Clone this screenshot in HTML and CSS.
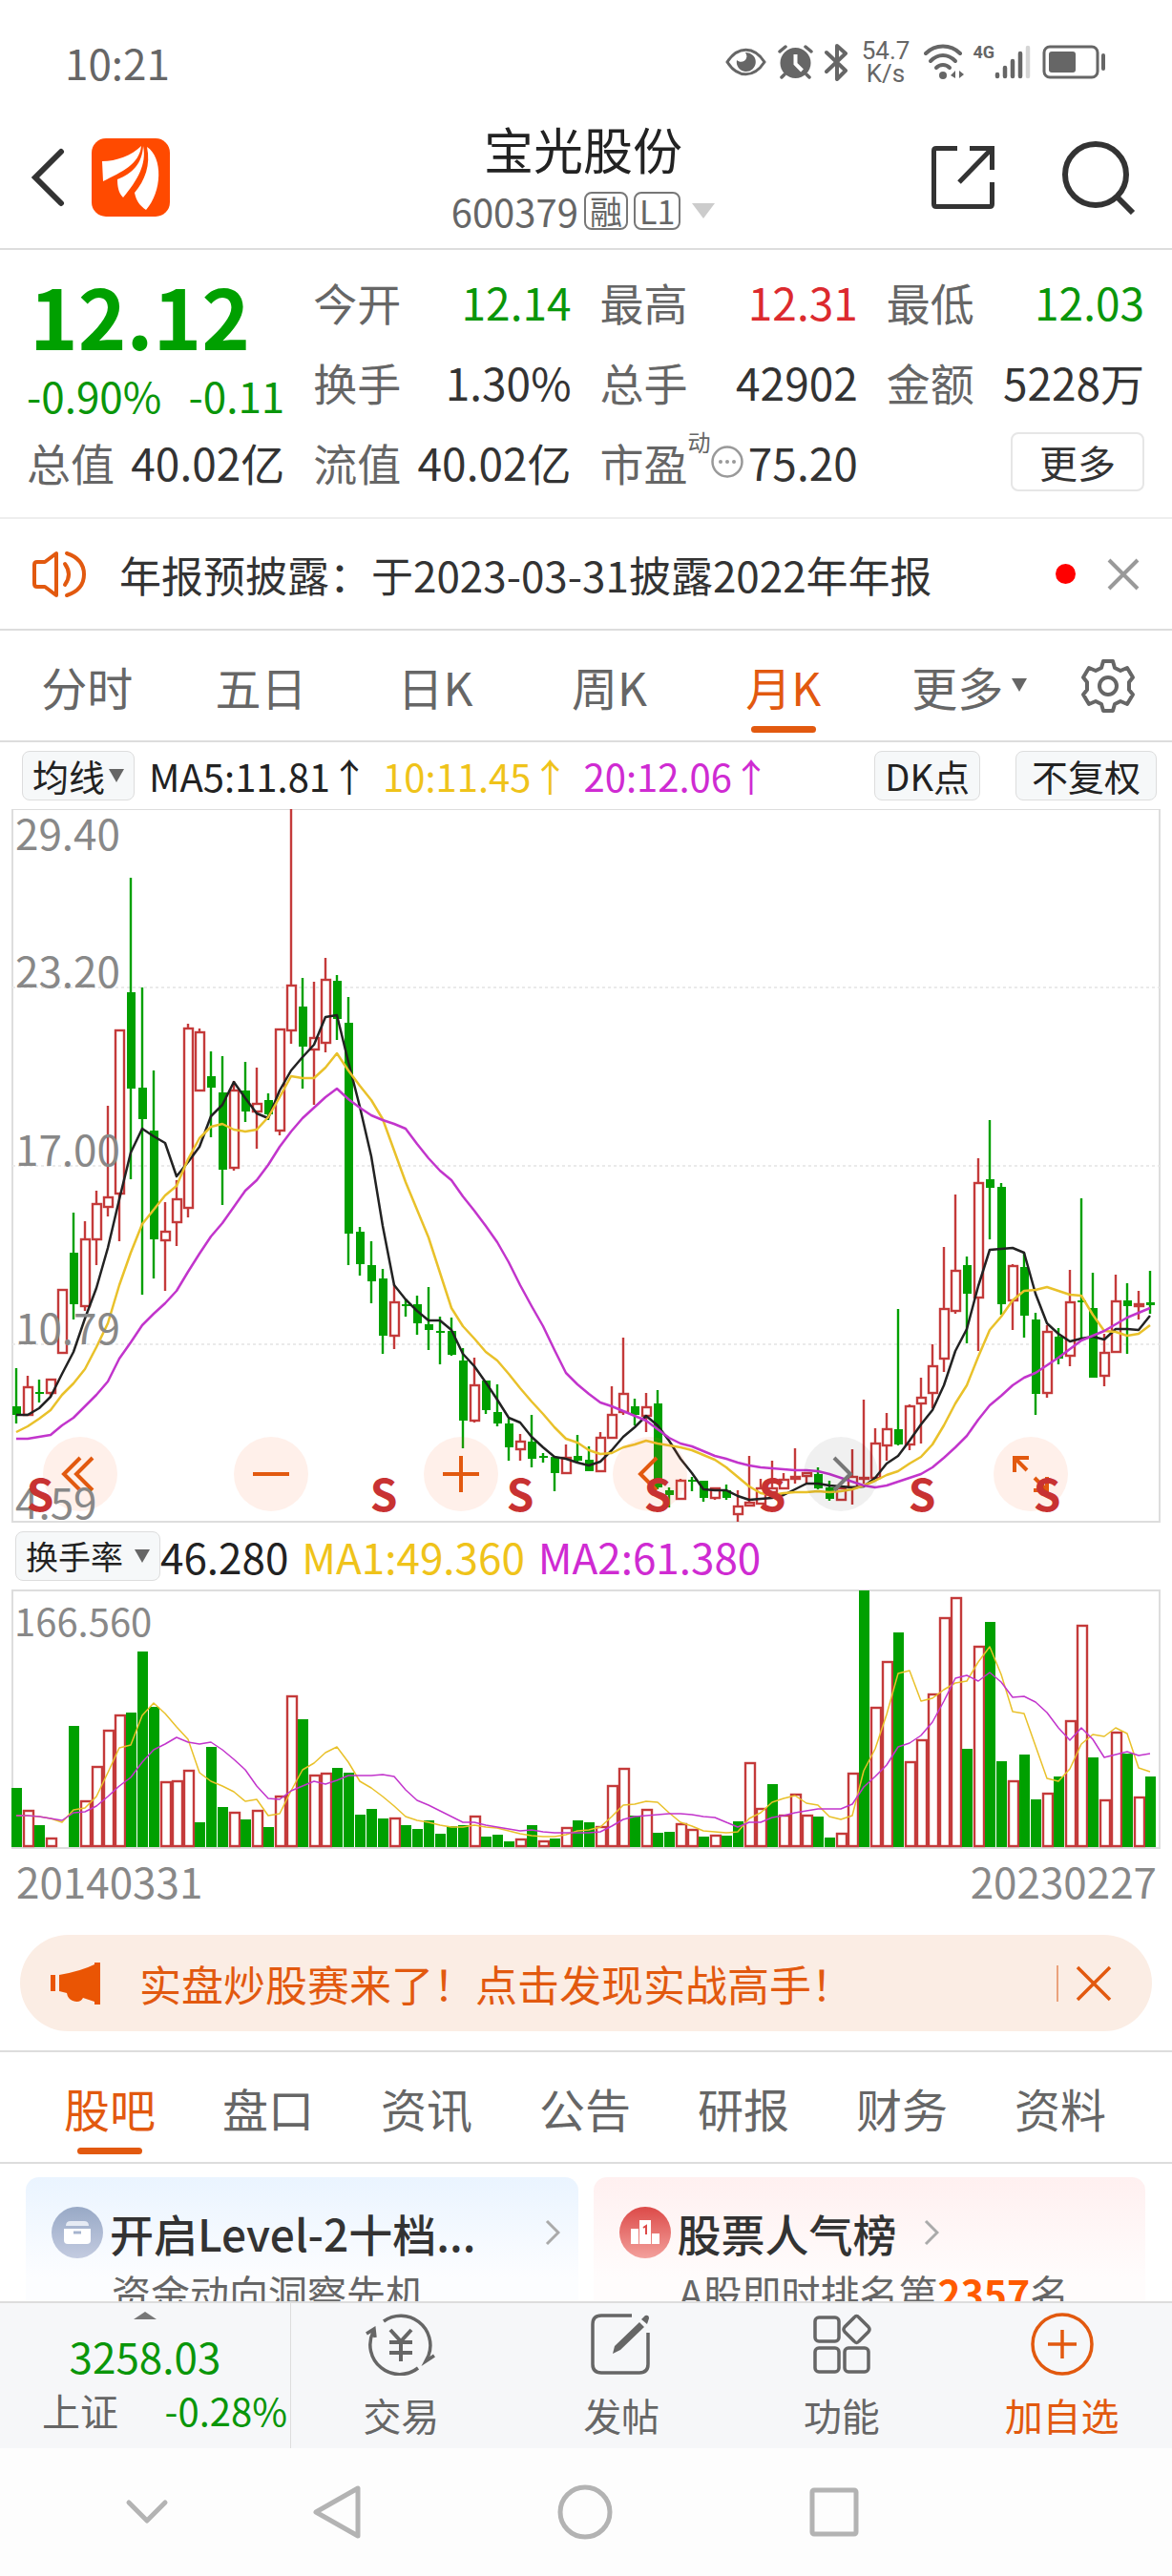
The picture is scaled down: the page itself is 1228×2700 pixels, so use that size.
FILE: index.html
```
<!DOCTYPE html>
<html lang="zh-CN">
<head>
  <meta charset="UTF-8">
  <meta name="viewport" content="width=device-width, initial-scale=1.0">
  <title>宝光股份 600379</title>
  <link rel="stylesheet" href="styles.css">
</head>
<body>

  <div class="status-bar">
    <span class="clock">10:21</span>
    <div class="status-icons">
      <svg class="ic-eye" width="43" height="30" viewBox="0 0 43 30">
        <path d="M2 15C13-2 30-2 41 15C30 32 13 32 2 15Z" fill="none" stroke="#666" stroke-width="3"/>
        <path d="M21 5a10 10 0 1 1-9 8c3 3 9 2 10-2c1-2 0-4-1-6Z" fill="#666"/>
      </svg>
      <svg class="ic-alarm" width="37" height="36" viewBox="0 0 37 36">
        <circle cx="18.500" cy="19" r="16" fill="#666"/>
        <path d="M18.500 10v10l7 7" fill="none" stroke="#fff" stroke-width="4"/>
        <path d="M2 7l6-5M35 7l-6-5M7 31l-3 3M30 31l3 3" stroke="#666" stroke-width="3.500" stroke-linecap="round"/>
      </svg>
      <svg class="ic-bt" width="24" height="40" viewBox="0 0 24 40">
        <path d="M2 10l20 19l-9 9V3l9 8L2 30" fill="none" stroke="#666" stroke-width="4" stroke-linejoin="round" stroke-linecap="round"/>
      </svg>
      <div class="net-speed"><span>54.7</span><span>K/s</span></div>
      <svg class="ic-wifi" width="42" height="38" viewBox="0 0 42 38">
        <g fill="none" stroke="#666" stroke-width="4" stroke-linecap="round">
          <path d="M2 10C12 0 28 0 38 10"/>
          <path d="M7 18C15 10 25 10 33 18"/>
          <path d="M13 25C17 21 23 21 27 25"/>
        </g>
        <circle cx="20" cy="33" r="4" fill="#666"/>
        <path d="M28 33l5-5v8zM42 32l-5-4v8z" fill="#666"/>
      </svg>
      <div class="signal">
        <span class="signal-type">4G</span>
        <svg width="38" height="36" viewBox="0 0 38 36" stroke-width="4.500" stroke-linecap="round">
          <path d="M3 31v2M11 24v9M19 17v16M27 9v24" stroke="#666"/>
          <path d="M35 3v30" stroke="#d5d5d5"/>
        </svg>
      </div>
      <svg class="ic-battery" width="68" height="36" viewBox="0 0 68 36">
        <rect x="2" y="2" width="56" height="32" rx="6" fill="none" stroke="#666" stroke-width="3"/>
        <rect x="7" y="7" width="28" height="22" rx="3" fill="#666"/>
        <path d="M64 11v14" stroke="#666" stroke-width="4" stroke-linecap="round"/>
      </svg>
    </div>
  </div>

  <header class="top-bar">
    <div class="top-left">
      <button class="icon-btn" aria-label="返回">
        <svg width="36" height="62" viewBox="0 0 36 62"><path d="M32 4L5 31L32 58" fill="none" stroke="#333" stroke-width="6" stroke-linecap="round"/></svg>
      </button>
      <svg class="logo" width="82" height="82" viewBox="0 0 82 82">
        <rect width="82" height="82" rx="15" fill="#ff4a00"/>
        <g fill="#fff">
          <path d="M11 24C26 24 42 18 52 8C50 27 32 35 12 45Z"/>
          <path d="M54 8C58 27 48 44 33 62C28 57 27 50 27 43C43 37 53 26 54 8Z"/>
          <path d="M58 9C75 20 74 56 57 75C50 70 47 66 45 57C56 44 62 28 58 9Z"/>
        </g>
      </svg>
    </div>
    <div class="stock-title">
      <h1>宝光股份</h1>
      <div class="stock-code">
        <span>600379</span>
        <span class="tag">融</span>
        <span class="tag">L1</span>
        <i class="caret caret-light"></i>
      </div>
    </div>
    <div class="top-right">
      <button class="icon-btn" aria-label="分享">
        <svg width="66" height="66" viewBox="0 0 66 66" fill="none" stroke="#333" stroke-width="5">
          <path d="M27 2.500H5Q2.500 2.500 2.500 5V61Q2.500 63.500 5 63.500H61Q63.500 63.500 63.500 61V38"/>
          <path d="M40 2.500H63.500V25M63 3L29 38"/>
        </svg>
      </button>
      <button class="icon-btn" aria-label="搜索">
        <svg width="78" height="78" viewBox="0 0 78 78" fill="none" stroke="#333" stroke-width="6">
          <circle cx="36" cy="36" r="32"/>
          <path d="M58 59L75 76"/>
        </svg>
      </button>
    </div>
  </header>

  <section class="quote">
    <div class="price-box">
      <div class="price">12.12</div>
      <div class="change"><span>-0.90%</span><span>-0.11</span></div>
    </div>
    <div class="item"><span class="label">今开</span><span class="down">12.14</span></div>
    <div class="item"><span class="label">最高</span><span class="up">12.31</span></div>
    <div class="item"><span class="label">最低</span><span class="down">12.03</span></div>
    <div class="item"><span class="label">换手</span><span>1.30%</span></div>
    <div class="item"><span class="label">总手</span><span>42902</span></div>
    <div class="item"><span class="label">金额</span><span>5228万</span></div>
    <div class="item"><span class="label">总值</span><span>40.02亿</span></div>
    <div class="item"><span class="label">流值</span><span>40.02亿</span></div>
    <div class="item">
      <span class="label pe">市盈<sup>动</sup>
        <svg width="34" height="34" viewBox="0 0 34 34">
          <circle cx="17" cy="17" r="15.500" fill="none" stroke="#999" stroke-width="2.500"/>
          <g fill="#999"><circle cx="10" cy="17" r="2"/><circle cx="17" cy="17" r="2"/><circle cx="24" cy="17" r="2"/></g>
        </svg>
      </span>
      <span>75.20</span>
    </div>
    <div class="item item-more"><button class="more-btn">更多</button></div>
  </section>

  <section class="notice">
    <svg class="speaker" width="58" height="50" viewBox="0 0 58 50" fill="none" stroke="#e2590f" stroke-width="4" stroke-linejoin="round" stroke-linecap="round">
      <path d="M26 3V47L14 38H6Q3 38 3 35V15Q3 12 6 12H14Z"/>
      <path d="M35 14Q43 25 35 36M37 3Q55 9 55 25T37 47"/>
    </svg>
    <a class="notice-text" href="#">年报预披露：于2023-03-31披露2022年年报</a>
    <i class="dot"></i>
    <button class="icon-btn" aria-label="关闭公告">
      <svg width="36" height="36" viewBox="0 0 36 36"><path d="M3 3L33 33M33 3L3 33" stroke="#999" stroke-width="4"/></svg>
    </button>
  </section>

  <nav class="period-tabs">
    <button>分时</button>
    <button>五日</button>
    <button>日K</button>
    <button>周K</button>
    <button class="active">月K</button>
    <button>更多<i class="caret caret-small"></i></button>
    <button class="gear" aria-label="设置">
      <svg width="58" height="58" viewBox="0 0 58 58" fill="none" stroke="#666" stroke-width="4" stroke-linejoin="round">
        <path d="M24 3H34L36 10L42 13L49 10L55 20L51 25V33L55 38L49 48L42 45L36 48L34 55H24L22 48L16 45L9 48L3 38L7 33V25L3 20L9 10L16 13L22 10Z"/>
        <circle cx="29" cy="29" r="9"/>
      </svg>
    </button>
  </nav>

  <div class="indicator-bar">
    <button class="chip">均线<i class="caret"></i></button>
    <span class="ma-dark">MA5:11.81↑</span>
    <span class="ma-yellow">10:11.45↑</span>
    <span class="ma-purple">20:12.06↑</span>
    <button class="chip chip-dk">DK点</button>
    <button class="chip chip-right">不复权</button>
  </div>

  <div class="chart">
    <svg id="kline" viewBox="12 0 1204 748"></svg>
    <button class="round-btn pos1" aria-label="最早">
      <svg viewBox="0 0 78 78"><path d="M39 22L22 39L39 56M52 22L35 39L52 56"/></svg>
    </button>
    <button class="round-btn pos2" aria-label="缩小">
      <svg viewBox="0 0 78 78"><path d="M20 39H58"/></svg>
    </button>
    <button class="round-btn pos3" aria-label="放大">
      <svg viewBox="0 0 78 78"><path d="M20 39H58M39 20V58"/></svg>
    </button>
    <button class="round-btn pos4" aria-label="向左">
      <svg viewBox="0 0 78 78"><path d="M46 22L29 39L46 56"/></svg>
    </button>
    <button class="round-btn round-grey pos5" aria-label="向右">
      <svg viewBox="0 0 78 78"><path d="M32 22L49 39L32 56"/></svg>
    </button>
    <button class="round-btn pos6" aria-label="全屏">
      <svg viewBox="0 0 78 78"><path d="M22 37V22H37M22 22L35 35M43 43L56 56M42 56H56V42"/></svg>
    </button>
    <svg class="overlay" viewBox="12 0 1204 748">
      <g class="axis">
        <text x="16" y="43">29.40</text>
        <text x="16" y="187">23.20</text>
        <text x="16" y="374">17.00</text>
        <text x="16" y="561">10.79</text>
        <text x="16" y="744">4.59</text>
      </g>
      <g class="sell" id="sell-marks"></g>
    </svg>
  </div>

  <div class="indicator-bar turnover-bar">
    <button class="chip">换手率<i class="caret"></i></button>
    <span class="ma-dark">46.280</span>
    <span class="ma-yellow">MA1:49.360</span>
    <span class="ma-purple">MA2:61.380</span>
  </div>

  <div class="chart">
    <svg id="turnover" viewBox="12 0 1204 272"></svg>
    <svg class="overlay" viewBox="12 0 1204 272">
      <g class="axis axis-small"><text x="15" y="49">166.560</text></g>
    </svg>
  </div>
  <div class="dates"><span>20140331</span><span>20230227</span></div>

  <div class="banner">
    <svg width="54" height="46" viewBox="0 0 54 46" fill="#ea5504">
      <path d="M0 14h5v17H0zM9 14Q32 10 46 3V1h6v44h-6v-3L34 38Q31 44 23 41Q18 39 17 33L9 31Z"/>
    </svg>
    <a class="banner-text" href="#">实盘炒股赛来了！点击发现实战高手！</a>
    <button class="icon-btn banner-close" aria-label="关闭">
      <svg width="38" height="38" viewBox="0 0 38 38"><path d="M2 2L36 36M36 2L2 36" stroke="#e2590f" stroke-width="3.500"/></svg>
    </button>
  </div>

  <nav class="info-tabs">
    <button class="active">股吧</button>
    <button>盘口</button>
    <button>资讯</button>
    <button>公告</button>
    <button>研报</button>
    <button>财务</button>
    <button>资料</button>
  </nav>

  <div class="cards">
    <a class="card card-blue" href="#">
      <div class="card-head">
        <svg width="54" height="54" viewBox="0 0 54 54">
          <defs><linearGradient id="g1" x2="0" y2="1"><stop stop-color="#98a9c6"/><stop offset="1" stop-color="#c3cbe0"/></linearGradient></defs>
          <circle cx="27" cy="27" r="27" fill="url(#g1)"/>
          <path d="M15 20Q15 15 20 15H34Q39 15 39 20Z" fill="#e6ebf4"/>
          <path d="M13 23H41V35Q41 39 37 39H17Q13 39 13 35Z" fill="#fff"/>
          <path d="M23 27H31" stroke="#a6b4ce" stroke-width="3"/>
        </svg>
        <span class="card-title">开启Level-2十档...</span>
        <svg class="arrow arrow-end" width="16" height="28" viewBox="0 0 16 28"><path d="M2 2L14 14L2 26"/></svg>
      </div>
      <p>资金动向洞察先机</p>
    </a>
    <a class="card card-red" href="#">
      <div class="card-head">
        <svg width="54" height="54" viewBox="0 0 54 54">
          <defs><linearGradient id="g2" x2="0" y2="1"><stop stop-color="#dc4a48"/><stop offset="1" stop-color="#f3a09c"/></linearGradient></defs>
          <circle cx="27" cy="27" r="27" fill="url(#g2)"/>
          <path d="M12 23h8v16h-8zM21 14h12v25H21zM34 28h8v11h-8z" fill="#fff"/>
          <path d="M25 22l3-2v9" fill="none" stroke="#dc4a48" stroke-width="2"/>
        </svg>
        <span class="card-title">股票人气榜</span>
        <svg class="arrow" width="16" height="28" viewBox="0 0 16 28"><path d="M2 2L14 14L2 26"/></svg>
      </div>
      <p>A股即时排名第<b>2357</b>名</p>
    </a>
  </div>

  <footer class="bottom">
    <div class="tool-bar">
      <button class="index-box">
        <i class="caret-up"></i>
        <span class="index-value">3258.03</span>
        <span class="index-row"><span>上证</span><span class="down">-0.28%</span></span>
      </button>
      <button class="tool">
        <svg width="74" height="66" viewBox="0 0 74 66" fill="none" stroke="#666" stroke-width="3.500">
          <path d="M19 9A31 31 0 0 1 66 45M66 45L63 51L72 45M55 58A31 31 0 0 1 8 20M1 22L9 17L10 26"/>
          <path d="M26 18L37 30L48 18M25 31H49M25 42H49M37 30V51" stroke-width="4"/>
        </svg>
        <span>交易</span>
      </button>
      <button class="tool">
        <svg width="66" height="66" viewBox="0 0 66 66" fill="none" stroke="#666" stroke-width="3.500">
          <path d="M44 3H12Q3 3 3 12V54Q3 63 12 63H52Q61 63 61 54V21"/>
          <path d="M24 43L26 35L52 10L57 15L32 39ZM54 7L58 3Q62 2 62 6L60 12Z" fill="#666" stroke="none"/>
        </svg>
        <span>发帖</span>
      </button>
      <button class="tool">
        <svg width="62" height="66" viewBox="0 0 62 66" fill="none" stroke="#666" stroke-width="3.500">
          <rect x="3" y="5" width="25" height="25" rx="4"/>
          <rect x="3" y="37" width="25" height="25" rx="4"/>
          <rect x="34" y="37" width="25" height="25" rx="4"/>
          <path d="M44 5Q46.500 2 49 5L59 15Q61 17.500 59 20L49 30Q46.500 33 44 30L34 20Q32 17.500 34 15Z"/>
        </svg>
        <span>功能</span>
      </button>
      <button class="tool tool-add">
        <svg width="66" height="66" viewBox="0 0 66 66" fill="none" stroke="#e2590f" stroke-width="3.500">
          <circle cx="33" cy="33" r="31"/>
          <path d="M18 33H48M33 18V48"/>
        </svg>
        <span>加自选</span>
      </button>
    </div>
    <div class="sys-nav">
      <svg class="sys-hide" width="46" height="28" viewBox="0 0 46 28"><path d="M4 4L23 23L42 4"/></svg>
      <svg class="sys-back" width="52" height="58" viewBox="0 0 52 58"><path d="M48 4V54L4 29Z"/></svg>
      <svg class="sys-home" width="58" height="58" viewBox="0 0 58 58"><circle cx="29" cy="29" r="26"/></svg>
      <svg class="sys-recent" width="54" height="54" viewBox="0 0 54 54"><rect x="4" y="4" width="46" height="46" rx="2"/></svg>
    </div>
  </footer>

  <script src="chart.js"></script>
</body>
</html>
```

FILE: styles.css
```
* {
  box-sizing: border-box;
}
body {
  margin: 0;
  padding-bottom: 287px;
  background: #fff;
  color: #333;
  font-family: "Noto Sans CJK SC", "Noto Sans", sans-serif;
  font-size: 44px;
  line-height: 1;
}
button {
  border: none;
  background: none;
  padding: 0;
  color: inherit;
  font: inherit;
  cursor: pointer;
}
a {
  color: inherit;
  text-decoration: none;
}
svg {
  display: block;
  flex: none;
}
.up {
  color: #dc2a2e;
}
.down {
  color: #0a960a;
}
.icon-btn {
  display: block;
}

/* carets */
.caret {
  display: inline-block;
  border: 8px solid transparent;
  border-top: 14px solid #666;
  border-bottom: 0;
}
.caret-light {
  border-width: 16px 12px 0;
  border-top-color: #ccc;
}
.caret-small {
  border-width: 14px 8px 0;
}
.caret-up {
  border: 12px solid transparent;
  border-bottom: 8px solid #777;
  border-top: 0;
}

/* status bar */
.status-bar {
  display: flex;
  align-items: center;
  justify-content: space-between;
  height: 122px;
  padding: 8px 68px 0 68px;
  color: #666;
}
.clock {
  font-size: 44px;
}
.status-icons {
  display: flex;
  align-items: center;
  gap: 12px;
}
.net-speed {
  display: flex;
  flex-direction: column;
  align-items: center;
  margin: 0 3px;
  font-family: Roboto, sans-serif;
  font-size: 26px;
  line-height: 24px;
}
.signal {
  display: flex;
  align-items: flex-start;
  margin-left: -3px;
}
.signal-type {
  font-family: Roboto, sans-serif;
  font-size: 18px;
  font-weight: bold;
  line-height: 16px;
}

/* header */
.top-bar {
  display: grid;
  grid-template-columns: 1fr auto 1fr;
  align-items: center;
  height: 140px;
  padding: 0 38px 4px 32px;
  border-bottom: 2px solid #ddd;
}
.top-left,
.top-right {
  display: flex;
  align-items: center;
  padding-bottom: 6px;
}
.top-left {
  gap: 28px;
}
.top-right {
  justify-content: flex-end;
  gap: 70px;
}
.stock-title {
  text-align: center;
}
.stock-title h1 {
  margin: 0;
  font-size: 52px;
  font-weight: normal;
  line-height: 64px;
  color: #222;
}
.stock-code {
  display: flex;
  align-items: center;
  justify-content: center;
  gap: 6px;
  font-size: 40px;
  line-height: 66px;
  color: #666;
}
.tag {
  padding: 0 4px;
  border: 2px solid #777;
  border-radius: 8px;
  font-size: 34px;
  line-height: 36px;
}
.stock-code .caret {
  margin-left: 6px;
}

/* quote */
.quote {
  display: grid;
  grid-template-columns: repeat(4, 1fr);
  grid-auto-rows: 84px;
  column-gap: 30px;
  padding: 12px 29px 16px 28px;
  border-bottom: 2px solid #eee;
  font-size: 46px;
}
.price-box {
  grid-row: span 2;
  color: #00a000;
}
.price {
  padding-left: 3px;
  font-size: 86px;
  font-weight: bold;
  line-height: 112px;
}
.change {
  display: flex;
  justify-content: space-between;
  font-size: 44px;
  line-height: 56px;
  color: #0a960a;
}
.item {
  display: flex;
  align-items: center;
  justify-content: space-between;
  white-space: nowrap;
}
.label {
  color: #666;
}
.pe {
  display: flex;
  align-items: center;
}
.pe sup {
  align-self: flex-start;
  margin-top: -10px;
  font-size: 24px;
  line-height: 24px;
}
.item-more {
  justify-content: flex-end;
}
.more-btn {
  width: 140px;
  height: 62px;
  border: 2px solid #e6e6e6;
  border-radius: 8px;
  font-size: 40px;
}

/* notice */
.notice {
  display: flex;
  align-items: center;
  height: 117px;
  padding: 0 33px;
  border-bottom: 2px solid #ddd;
}
.speaker {
  margin-right: 34px;
}
.notice-text {
  flex: 1;
}
.dot {
  width: 21px;
  height: 21px;
  margin-right: 32px;
  border-radius: 50%;
  background: #f00;
}

/* tabs */
.period-tabs,
.info-tabs {
  display: flex;
  height: 117px;
  border-bottom: 2px solid #ddd;
  font-size: 48px;
  color: #666;
}
.period-tabs button,
.info-tabs button {
  position: relative;
  flex: 183;
}
.period-tabs .gear {
  display: flex;
  flex: 134;
  align-items: center;
  justify-content: center;
}
.period-tabs .caret {
  position: absolute;
  right: 18px;
  top: 50px;
}
.period-tabs .active,
.info-tabs .active {
  color: #e2590f;
}
.active::after {
  content: "";
  position: absolute;
  left: 50%;
  bottom: 8px;
  width: 68px;
  height: 7px;
  margin-left: -34px;
  border-radius: 4px;
  background: #e2590f;
}

/* indicator rows over the charts */
.indicator-bar {
  display: flex;
  align-items: center;
  gap: 15px;
  height: 70px;
  padding: 0 16px 0 23px;
  font-size: 40px;
}
.chip {
  display: flex;
  align-items: center;
  gap: 4px;
  height: 52px;
  padding: 0 10px;
  border: 1px solid #ddd;
  border-radius: 8px;
  background: #f6f8f9;
  color: #222;
  font-size: 38px;
}
.chip-dk {
  margin-left: auto;
  margin-right: 22px;
}
.chip-right {
  padding: 0 16px;
}
.turnover-bar {
  gap: 14px;
  padding-left: 16px;
  font-size: 44px;
}
.turnover-bar .ma-dark {
  margin-left: -14px;
}
.turnover-bar .chip {
  gap: 12px;
  font-size: 34px;
}
.ma-dark {
  color: #222;
}
.ma-yellow {
  color: #efc31a;
}
.ma-purple {
  color: #cf2bd2;
}

/* charts */
.chart {
  position: relative;
  margin: 0 12px;
}
.chart > svg {
  width: 100%;
  height: auto;
}
.overlay {
  position: absolute;
  left: 0;
  top: 0;
  pointer-events: none;
}
.axis {
  fill: #888;
  font-size: 44px;
}
.axis-small {
  font-size: 40px;
}
.sell {
  fill: #c83232;
  font-size: 46px;
  font-weight: bold;
  text-anchor: middle;
}
.round-btn {
  position: absolute;
  top: 88%;
  width: 78px;
  height: 78px;
  margin-left: -39px;
  border-radius: 50%;
  background: rgba(255, 110, 50, 0.1);
}
.round-btn path {
  fill: none;
  stroke: #e2590f;
  stroke-width: 4;
}
.round-grey {
  background: rgba(0, 0, 0, 0.06);
}
.round-grey path {
  stroke: #777;
}
.pos1 { left: 6%; }
.pos2 { left: 22.6%; }
.pos3 { left: 39.1%; }
.pos4 { left: 55.6%; }
.pos5 { left: 72.2%; }
.pos6 { left: 88.7%; }
.frame {
  fill: none;
  stroke: #ddd;
  stroke-width: 2;
}
.grid-line {
  stroke: #eaeaea;
  stroke-width: 2;
  stroke-dasharray: 3 3;
}
.k-up {
  fill: #fff;
  stroke: #c43a3a;
  stroke-width: 2.4;
}
.k-down {
  fill: #00a000;
}
.wick-up {
  stroke: #c43a3a;
  stroke-width: 2.4;
}
.wick-down {
  stroke: #00a000;
  stroke-width: 2.4;
}
.line {
  fill: none;
  stroke-width: 2.5;
  stroke-linejoin: round;
}
.line-dark { stroke: #222; }
.line-yellow { stroke: #e9c12a; }
.line-purple { stroke: #c235cc; }
.line-thin { stroke-width: 1.5; }
.dates {
  display: flex;
  justify-content: space-between;
  height: 70px;
  padding: 0 16px 0 17px;
  line-height: 66px;
  color: #888;
}

/* banner */
.banner {
  display: flex;
  align-items: center;
  height: 101px;
  margin: 20px 21px;
  padding: 0 42px 0 32px;
  border-radius: 51px;
  background: #fbede4;
  color: #e2590f;
}
.banner-text {
  flex: 1;
  margin-left: 39px;
}
.banner-close {
  padding-left: 18px;
  border-left: 2px solid #eaa27c;
}
.info-tabs {
  height: 119px;
  padding: 0 34px 0 32px;
  border-top: 2px solid #ddd;
}

/* cards */
.cards {
  display: grid;
  grid-template-columns: 1fr 1fr;
  gap: 16px;
  padding: 14px 28px 0 27px;
}
.card {
  height: 131px;
  padding: 30px 19px 0 27px;
  border-radius: 14px 14px 0 0;
}
.card-blue {
  background: linear-gradient(#eaf4ff, #fcfdff 80%);
}
.card-red {
  background: linear-gradient(#fff0f0, #fffcfc 80%);
}
.card-head {
  display: flex;
  align-items: center;
  height: 56px;
}
.card-title {
  margin-left: 7px;
  font-size: 46px;
  font-weight: 500;
  white-space: nowrap;
}
.arrow {
  margin-left: 28px;
  fill: none;
  stroke: #aaa;
  stroke-width: 3;
}
.arrow-end {
  margin-left: auto;
}
.card p {
  margin: 10px 0 0 63px;
  font-size: 41px;
  line-height: 48px;
  color: #666;
  white-space: nowrap;
}
.card b {
  color: #ff5a00;
}

/* bottom */
.bottom {
  position: fixed;
  left: 0;
  right: 0;
  bottom: 0;
}
.tool-bar {
  display: grid;
  grid-template-columns: 305px repeat(4, 1fr);
  height: 154px;
  border-top: 2px solid #ddd;
  background: #f6f7f9;
  color: #666;
  font-size: 40px;
}
.index-box {
  display: flex;
  flex-direction: column;
  align-items: center;
  padding-top: 9px;
  border-right: 1px solid #ddd;
}
.index-value {
  margin-top: 8px;
  font-size: 44px;
  line-height: 60px;
  color: #0a960a;
}
.index-row {
  display: flex;
  justify-content: space-between;
  width: 100%;
  padding: 0 3px 0 44px;
  line-height: 54px;
}
.tool {
  display: flex;
  flex-direction: column;
  align-items: center;
  padding-top: 10px;
}
.tool span {
  margin-top: 14px;
  line-height: 54px;
}
.tool-add {
  color: #e2590f;
}
.sys-nav {
  display: flex;
  align-items: center;
  gap: 205px;
  height: 134px;
  padding-left: 131px;
  background: #fdfdfd;
}
.sys-nav svg {
  fill: none;
  stroke: #b3b3b3;
  stroke-width: 5;
  stroke-linejoin: round;
  stroke-linecap: round;
}
.sys-hide {
  margin-right: -55px;
}
```

FILE: chart.js
```
const NS = 'http://www.w3.org/2000/svg';
const STEP = 12;
const FIRST_X = 17;

// 月K: 类型 最高 实体上 实体下 最低
const candles = `
G 586 626 635 644|R 594 606 635 635|G 598 611 612 622|R 597 598 612 616|R 504 504 570 570
G 423 465 519 535|R 432 451 521 526|R 400 414 451 478|R 311 407 417 427|R 231 232 403 453
G 72 192 293 388|G 187 292 325 509|G 274 337 451 492|R 412 443 452 505|R 389 409 433 458
R 225 230 418 428|R 230 234 295 295|G 254 280 292 344|G 259 297 378 415|R 285 295 376 379
G 265 295 317 328|R 271 309 317 356|G 298 305 320 326|R 231 231 337 342|R 0 185 232 246
G 177 207 249 293|R 181 240 252 310|R 156 179 245 255|G 174 180 220 242|G 197 224 445 478
G 438 443 477 489|G 453 478 495 518|G 482 492 552 571|R 498 517 552 566|G 513 519 521 532
G 510 519 539 551|G 501 540 546 567|G 532 547 549 582|G 533 547 572 573|G 565 578 641 670
R 575 604 641 643|G 599 599 630 634|G 603 632 644 647|G 639 644 669 683|R 655 663 671 683
G 635 663 681 690|G 675 678 679 685|G 679 679 696 715|R 666 680 696 696|G 656 678 683 684
G 668 682 694 694|R 653 659 694 694|R 605 635 659 659|R 554 613 632 635|G 618 626 635 646
R 612 627 636 653|G 609 623 711 713|G 711 714 719 732|R 702 704 723 723|G 700 703 704 715
G 704 704 722 726|R 712 712 722 724|G 708 714 722 724|R 714 731 739 747|R 678 727 730 730
R 702 712 728 728|R 683 712 716 716|R 696 703 712 712|R 670 700 702 707|R 695 696 699 707
G 690 697 712 713|G 704 711 723 725|R 712 712 724 724|R 671 700 711 729|R 619 701 702 707
R 649 665 701 701|R 633 650 667 683|G 524 650 666 667|R 624 626 666 672|R 596 617 623 665
R 561 584 612 628|R 459 524 576 590|R 404 484 526 529|G 469 478 508 560|R 366 392 512 568
G 326 388 397 451|G 392 396 519 530|R 477 479 515 546|G 465 480 531 554|G 528 535 613 635
R 541 548 612 617|G 544 553 576 582|R 483 517 573 584|G 408 515 517 554|G 486 523 596 596
R 550 570 594 605|R 488 516 569 569|G 497 515 521 571|R 505 519 521 535|G 484 517 520 529`;

const ma5 = [635,635,628,616,592,569,534,502,460,409,360,335,343,350,385,370,354,322,310,286,303,319,324,295,274,260,247,218,216,265,312,364,437,499,514,526,536,536,546,571,584,601,619,638,643,658,669,679,681,685,688,684,672,658,648,636,646,662,681,696,713,714,714,720,724,723,722,719,713,707,707,709,710,711,710,701,686,678,662,645,630,604,568,545,500,462,461,460,465,508,539,550,558,555,553,556,545,545,546,531];
const ma10 = [653,647,639,630,614,602,587,564,539,499,465,435,420,405,395,367,345,333,330,336,338,336,323,302,280,282,282,271,256,274,290,305,325,358,391,420,449,486,523,542,555,569,578,592,607,621,634,648,660,664,672,676,675,669,666,662,665,667,669,672,677,682,690,700,710,717,719,717,716,716,715,716,715,713,709,704,698,694,686,679,666,646,623,604,574,546,532,515,505,504,501,505,509,510,530,547,548,552,550,541];
const ma20 = [660,660,658,656,646,638,626,614,600,576,559,541,529,518,505,485,466,448,434,417,400,389,373,354,338,324,313,302,293,304,313,321,326,330,335,351,366,379,389,406,421,437,454,475,499,521,542,567,591,603,613,622,626,631,636,641,650,659,665,668,673,678,681,685,688,690,691,692,693,693,694,697,701,705,709,711,709,705,701,697,690,680,669,657,640,625,615,604,596,591,583,575,566,557,552,547,540,533,528,523];

// 换手率柱
const bars = 'G208 R232 G247 R261 R269 G143 R222 R186 R148 R132 G129 G65 G123 R202 R201 R190 G244 G165 G228 R234 G241 R232 G249 R217 R112 G136 R195 R193 G187 G192 G236 G230 G240 R240 G247 G251 G242 G256 G248 G247 R238 G259 G257 G264 R262 G247 R264 G261 R250 G242 G244 R249 R206 R188 G237 R231 G255 G254 R246 R252 G259 R258 G258 G243 R182 R230 G204 R237 R215 R237 G238 G260 R256 R193 G1 R124 R76 G45 R181 R158 R110 R30 R9 G167 R60 G34 G180 R201 G173 G220 R214 G196 R138 R38 G176 R221 R150 G172 R218 G196';
const vma1 = [237,237,238,240,244,231,229,217,192,166,163,132,119,130,144,157,192,201,206,212,222,220,237,235,211,189,182,171,165,181,201,208,217,227,238,242,244,247,249,249,247,249,250,253,256,258,259,259,257,253,252,249,238,226,225,222,223,234,244,248,253,254,255,254,240,234,223,219,216,224,226,238,241,237,190,167,131,88,85,117,114,105,98,96,76,60,89,128,130,164,198,201,188,162,152,154,145,151,187,191];
const vma2 = [237,237,238,240,242,234,233,227,217,206,197,181,168,162,155,160,162,160,168,178,189,206,219,220,211,206,201,204,200,195,195,195,194,196,210,221,226,232,238,244,244,247,249,251,253,252,254,255,255,255,255,254,248,241,238,237,236,235,235,236,238,239,244,249,244,244,239,237,234,232,230,230,230,225,207,196,184,165,161,153,139,117,93,90,96,87,97,113,112,118,129,145,158,145,157,176,173,170,174,172];

function add(parent, name, attrs) {
  const el = document.createElementNS(NS, name);
  for (const key in attrs) el.setAttribute(key, attrs[key]);
  parent.appendChild(el);
  return el;
}

function xAt(i) {
  return FIRST_X + i * STEP;
}

function addLine(svg, values, cls) {
  const points = values.map((v, i) => `${xAt(i)},${v}`).join(' ');
  add(svg, 'polyline', { points, class: 'line ' + cls });
}

// K线图
const kline = document.getElementById('kline');
add(kline, 'rect', { x: 13, y: 0, width: 1202, height: 747, class: 'frame' });
[187, 374, 561].forEach(y => {
  add(kline, 'line', { x1: 13, x2: 1215, y1: y, y2: y, class: 'grid-line' });
});
candles.trim().split(/[|\n]/).forEach((row, i) => {
  const [type, high, top, bottom, low] = row.split(' ').map((v, n) => n ? Number(v) : v);
  const x = xAt(i);
  const dir = type === 'R' ? 'up' : 'down';
  add(kline, 'line', { x1: x, x2: x, y1: high, y2: low, class: 'wick-' + dir });
  if (dir === 'up') {
    add(kline, 'rect', { x: x - 4, y: top, width: 9, height: Math.max(bottom - top, 1), class: 'k-up' });
  } else {
    add(kline, 'rect', { x: x - 4, y: top, width: 9, height: Math.max(bottom - top, 2), class: 'k-down' });
  }
});
addLine(kline, ma5, 'line-dark');
addLine(kline, ma10, 'line-yellow');
addLine(kline, ma20, 'line-purple');

// 卖点标记
const sellMarks = document.getElementById('sell-marks');
[42, 402, 545, 689, 809, 966, 1097].forEach(x => {
  add(sellMarks, 'text', { x, y: 736 }).textContent = 'S';
});

// 换手率图
const turnover = document.getElementById('turnover');
add(turnover, 'rect', { x: 13, y: 1, width: 1202, height: 270, class: 'frame' });
bars.split(' ').forEach((bar, i) => {
  const top = Number(bar.slice(1));
  const x = xAt(i);
  if (bar[0] === 'R') {
    add(turnover, 'rect', { x: x - 4, y: top, width: 10, height: 269 - top, class: 'k-up' });
  } else {
    add(turnover, 'rect', { x: x - 5, y: top, width: 11, height: 270 - top, class: 'k-down' });
  }
});
addLine(turnover, vma1, 'line-yellow line-thin');
addLine(turnover, vma2, 'line-purple line-thin');
```
